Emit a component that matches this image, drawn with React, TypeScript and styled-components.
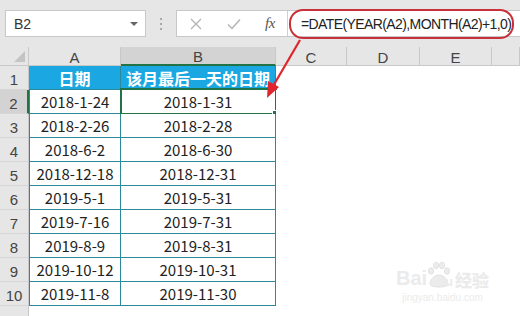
import * as React from "react"
import styled, { createGlobalStyle } from "styled-components"

const GlobalStyle = createGlobalStyle`
    html, body {
        margin: 0;
        padding: 0;
        background: #fff;
    }
    body {
        font-family: "Noto Sans CJK SC", "Noto Sans", sans-serif;
        color: #222;
    }
`

const teal = "#2b8a9a"
const green = "#217346"

const Screen = styled.div`
    position: relative;
    width: 520px;
    height: 316px;
    overflow: hidden;
    background: #fff;
`

const Toolbar = styled.div`
    display: flex;
    align-items: flex-start;
    height: 47px;
    padding: 10px 0 0 5px;
    box-sizing: border-box;
    background: #e6e6e6;
`

const NameBox = styled.div`
    display: flex;
    flex-shrink: 0;
    align-items: center;
    justify-content: space-between;
    width: 141px;
    height: 27px;
    padding: 0 7px 0 8px;
    box-sizing: border-box;
    background: #fff;
    border: 1px solid #c8c8c8;
    font-family: "Liberation Sans", "Noto Sans", sans-serif;
    font-size: 14px;
    color: #333;
`

const DropArrow = styled.span`
    width: 0;
    height: 0;
    border-left: 4px solid transparent;
    border-right: 4px solid transparent;
    border-top: 4px solid #666;
`

const Grip = styled.div`
    display: flex;
    flex-shrink: 0;
    flex-direction: column;
    justify-content: center;
    align-items: center;
    gap: 3px;
    width: 30px;
    height: 27px;

    span {
        width: 2px;
        height: 2px;
        background: #a8a8a8;
    }
`

const FormulaBox = styled.div`
    display: flex;
    align-items: center;
    flex: 1;
    min-width: 0;
    height: 27px;
    box-sizing: border-box;
    background: #fff;
    border: 1px solid #c8c8c8;
    border-right: none;
`

const IconSlot = styled.div<{ $w: number }>`
    display: flex;
    flex-shrink: 0;
    align-items: center;
    justify-content: center;
    width: ${p => p.$w}px;
    height: 100%;
`

const Fx = styled.span`
    font-family: "Liberation Serif", serif;
    font-style: italic;
    font-size: 15px;
    color: #555;
    letter-spacing: -0.5px;
`

const FormulaText = styled.div`
    flex: 1;
    min-width: 0;
    height: 100%;
    display: flex;
    align-items: center;
    padding-left: 13px;
    border-left: 1px solid #d0d0d0;
    font-family: "Liberation Sans", "Noto Sans", sans-serif;
    font-size: 14px;
    letter-spacing: -0.6px;
    color: #222;
    white-space: nowrap;
    overflow: hidden;
`

const Sheet = styled.div`
    display: grid;
    grid-template-columns: 29px 92px 155px 71px 73px 72px 1fr;
    grid-template-rows: 19px repeat(11, 24px);
`

const Corner = styled.div`
    position: relative;
    background: #e6e6e6;
    border-right: 1px solid #c8c8c8;
    border-bottom: 1px solid #c8c8c8;
    box-sizing: border-box;

    &::after {
        content: "";
        position: absolute;
        right: 3px;
        bottom: 3px;
        width: 0;
        height: 0;
        border-left: 11px solid transparent;
        border-bottom: 11px solid #c4c4c4;
    }
`

const ColHeader = styled.div<{ $selected?: boolean }>`
    display: flex;
    justify-content: center;
    align-items: center;
    box-sizing: border-box;
    background: ${p => (p.$selected ? "#d3d3d3" : "#e6e6e6")};
    border-right: 1px solid #c8c8c8;
    border-bottom: ${p => (p.$selected ? `2px solid ${green}` : "1px solid #c8c8c8")};
    font-family: "Liberation Sans", "Noto Sans", sans-serif;
    font-size: 15px;
    color: #444;
    line-height: 1;
    padding-top: 2px;
`

const RowHeader = styled.div<{ $selected?: boolean }>`
    display: flex;
    justify-content: center;
    align-items: flex-end;
    padding-bottom: 1px;
    box-sizing: border-box;
    background: ${p => (p.$selected ? "#d3d3d3" : "#e6e6e6")};
    border-right: ${p => (p.$selected ? `2px solid ${green}` : "1px solid #c8c8c8")};
    border-bottom: 1px solid #d6d6d6;
    font-family: "Liberation Sans", "Noto Sans", sans-serif;
    font-size: 15px;
    color: #444;
`

const Cell = styled.div<{ $kind: "head" | "data" | "empty"; $first?: boolean }>`
    position: relative;
    display: flex;
    justify-content: center;
    align-items: center;
    box-sizing: border-box;
    white-space: nowrap;
    font-size: ${p => (p.$kind === "head" ? "16px" : "15px")};
    font-weight: ${p => (p.$kind === "head" ? 700 : 400)};
    color: ${p => (p.$kind === "head" ? "#fff" : "#222")};
    background: ${p => (p.$kind === "head" ? "#1ba7e1" : "#fff")};
    ${p =>
        p.$kind !== "empty" &&
        `border-right: 1px solid ${teal}; border-bottom: 1px solid ${teal};`}
    ${p => p.$first && p.$kind === "data" && `border-left: 1px solid ${teal};`}
`

const Selection = styled.div`
    position: absolute;
    left: -1px;
    top: -2px;
    right: -2px;
    bottom: -2px;
    border: 2px solid ${green};
    pointer-events: none;

    &::after {
        content: "";
        position: absolute;
        right: -5px;
        bottom: -5px;
        width: 6px;
        height: 6px;
        background: ${green};
        border: 1px solid #fff;
    }
`

const Overlay = styled.svg`
    position: absolute;
    left: 0;
    top: 0;
    pointer-events: none;
`

const Watermark = styled.div`
    position: absolute;
    left: 396px;
    top: 262px;
    display: flex;
    flex-direction: column;
    align-items: center;
    white-space: nowrap;
    color: #ebebeb;
    font-family: "Liberation Sans", sans-serif;
    pointer-events: none;
`

const WatermarkLogo = styled.div`
    display: flex;
    align-items: flex-end;
    font-size: 20px;
    font-weight: 700;
    line-height: 1;

    small {
        font-size: 13px;
        margin: 0 2px 0 -14px;
    }

    b {
        font-family: "Noto Sans CJK SC", sans-serif;
        font-size: 17px;
    }
`

const WatermarkUrl = styled.div`
    font-size: 10px;
    margin-top: 4px;
`

const rows: [string, string][] = [
    ["2018-1-24", "2018-1-31"],
    ["2018-2-26", "2018-2-28"],
    ["2018-6-2", "2018-6-30"],
    ["2018-12-18", "2018-12-31"],
    ["2019-5-1", "2019-5-31"],
    ["2019-7-16", "2019-7-31"],
    ["2019-8-9", "2019-8-31"],
    ["2019-10-12", "2019-10-31"],
    ["2019-11-8", "2019-11-30"],
]

const columns = ["A", "B", "C", "D", "E", ""]

const EmptyCells: React.FunctionComponent = () => (
    <>
        <Cell $kind="empty" />
        <Cell $kind="empty" />
        <Cell $kind="empty" />
        <Cell $kind="empty" />
    </>
)

export default function App() {
    return (
        <Screen>
            <GlobalStyle />
            <Toolbar>
                <NameBox>
                    B2
                    <DropArrow />
                </NameBox>
                <Grip>
                    <span />
                    <span />
                    <span />
                </Grip>
                <FormulaBox>
                    <IconSlot $w={38}>
                        <svg width="12" height="12" viewBox="0 0 12 12">
                            <path d="M1 1l10 10M11 1L1 11" stroke="#b4b4b4" strokeWidth="1.4" />
                        </svg>
                    </IconSlot>
                    <IconSlot $w={38}>
                        <svg width="14" height="12" viewBox="0 0 14 12">
                            <path d="M1 6.5l4 4L13 1.5" stroke="#b4b4b4" strokeWidth="1.5" fill="none" />
                        </svg>
                    </IconSlot>
                    <IconSlot $w={34}>
                        <Fx>fx</Fx>
                    </IconSlot>
                    <FormulaText>=DATE(YEAR(A2),MONTH(A2)+1,0)</FormulaText>
                </FormulaBox>
            </Toolbar>

            <Sheet>
                <Corner />
                {columns.map(c => (
                    <ColHeader key={c || "F"} $selected={c === "B"}>
                        {c}
                    </ColHeader>
                ))}

                <RowHeader>1</RowHeader>
                <Cell $kind="head" $first>
                    日期
                </Cell>
                <Cell $kind="head">该月最后一天的日期</Cell>
                <EmptyCells />

                {rows.map(([start, end], i) => (
                    <React.Fragment key={start}>
                        <RowHeader $selected={i === 0}>{i + 2}</RowHeader>
                        <Cell $kind="data" $first>
                            {start}
                        </Cell>
                        <Cell $kind="data">
                            {end}
                            {i === 0 && <Selection />}
                        </Cell>
                        <EmptyCells />
                    </React.Fragment>
                ))}

                <RowHeader />
                <Cell $kind="empty" />
                <Cell $kind="empty" />
                <EmptyCells />
            </Sheet>

            <Overlay width="520" height="316" viewBox="0 0 520 316">
                <rect x="290" y="10" width="223" height="28" rx="13" fill="none" stroke="#c9303a" strokeWidth="2" />
                <path d="M300 40L272 88" stroke="#e0252e" strokeWidth="2.2" />
                <path d="M267 98L268 81L279 87z" fill="#e0252e" />
            </Overlay>

            <Watermark>
                <WatermarkLogo>
                    Bai
                    <svg width="24" height="26" viewBox="0 0 24 26">
                        <g fill="#ececec" stroke="#e2e2e2" strokeWidth="1">
                            <ellipse cx="4" cy="9" rx="2.6" ry="3.2" />
                            <ellipse cx="9" cy="3.5" rx="2.6" ry="3.2" />
                            <ellipse cx="15" cy="3.5" rx="2.6" ry="3.2" />
                            <ellipse cx="20" cy="9" rx="2.6" ry="3.2" />
                            <path d="M3 22c0-5 5-9 9-9s9 4 9 9c0 2-4 3-9 3s-9-1-9-3z" />
                        </g>
                    </svg>
                    <small>du</small>
                    <b>经验</b>
                </WatermarkLogo>
                <WatermarkUrl>jingyan.baidu.com</WatermarkUrl>
            </Watermark>
        </Screen>
    )
}
